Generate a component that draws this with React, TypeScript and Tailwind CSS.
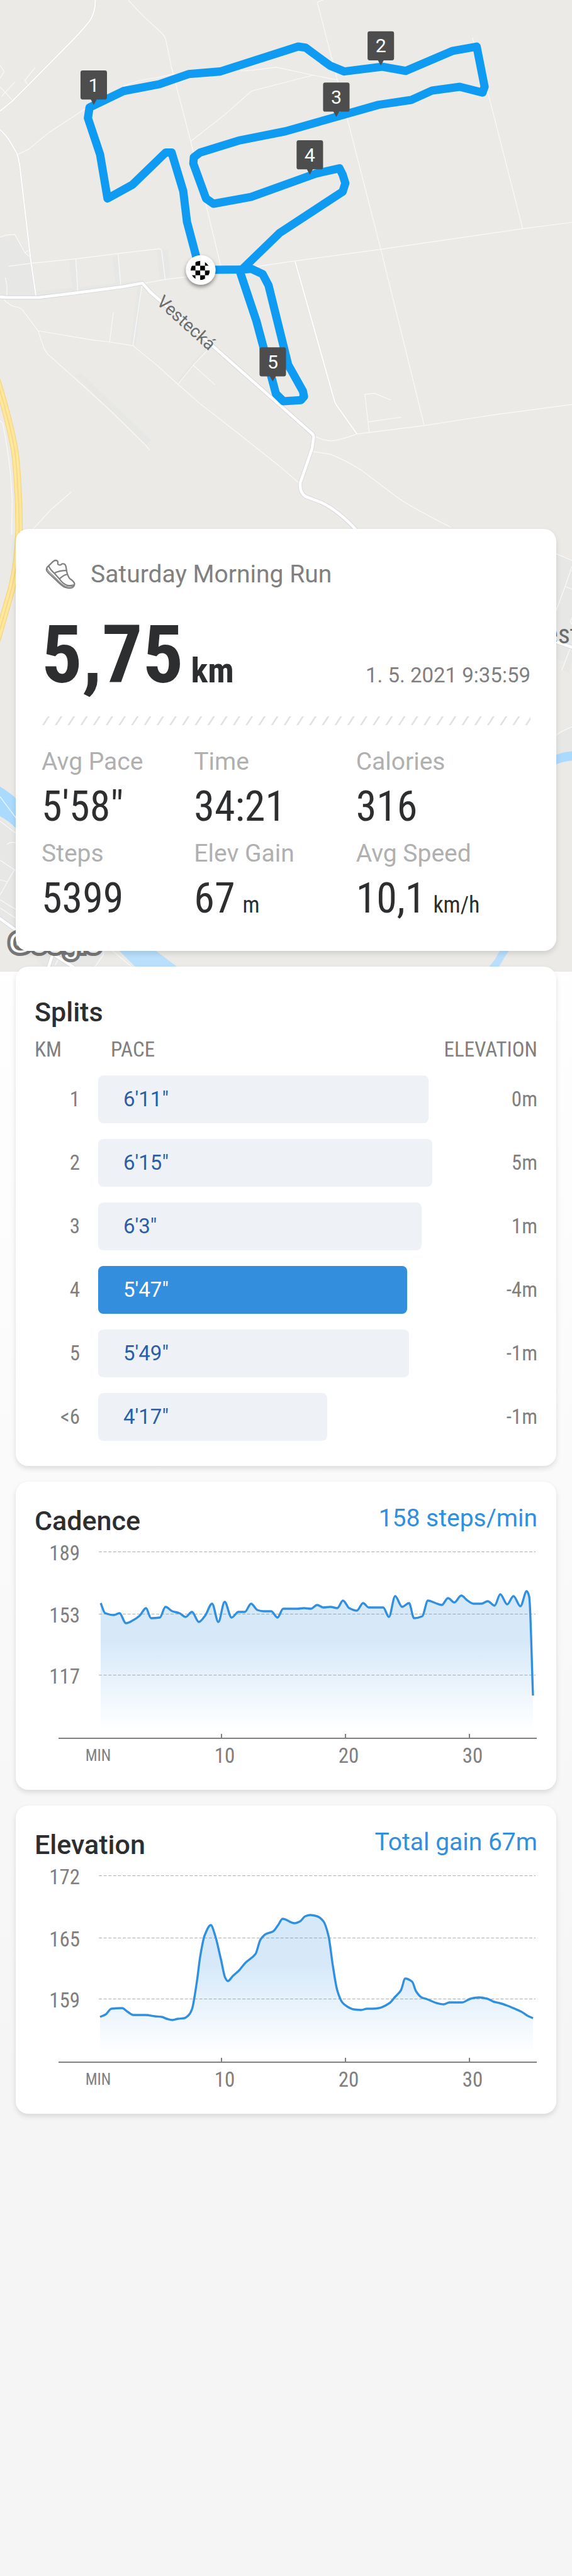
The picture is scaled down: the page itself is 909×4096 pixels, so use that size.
import React from 'react';

type Point = [number, number];

interface Split {
  km: string;
  pace: string;
  seconds: number;
  elevation: string;
}

const stats = [
  { label: 'Avg Pace', value: '5\'58"', unit: '' },
  { label: 'Time', value: '34:21', unit: '' },
  { label: 'Calories', value: '316', unit: '' },
  { label: 'Steps', value: '5399', unit: '' },
  { label: 'Elev Gain', value: '67', unit: 'm' },
  { label: 'Avg Speed', value: '10,1', unit: 'km/h' },
];

const splits: Split[] = [
  { km: '1', pace: '6\'11"', seconds: 371, elevation: '0m' },
  { km: '2', pace: '6\'15"', seconds: 375, elevation: '5m' },
  { km: '3', pace: '6\'3"', seconds: 363, elevation: '1m' },
  { km: '4', pace: '5\'47"', seconds: 347, elevation: '-4m' },
  { km: '5', pace: '5\'49"', seconds: 349, elevation: '-1m' },
  { km: '<6', pace: '4\'17"', seconds: 257, elevation: '-1m' },
];

const FULL_BAR_SECONDS = 380;
const FASTEST_KM = '4';

const cadence: Point[] = [
  [105, 107], [112, 123], [126, 126], [135, 123], [145, 139], [157, 134], [167, 127], [177, 115],
  [185, 131], [199, 130], [208, 113], [219, 120], [230, 123], [240, 129], [250, 121], [261, 137],
  [271, 127], [282, 108], [292, 137], [302, 105], [313, 130], [324, 121], [334, 121], [344, 108],
  [354, 118], [364, 120], [376, 120], [386, 130], [395, 116], [407, 116], [418, 116], [428, 115],
  [439, 116], [449, 110], [459, 114], [470, 113], [481, 115], [490, 103], [500, 115], [512, 119],
  [522, 107], [531, 114], [543, 114], [554, 114], [563, 129], [573, 96], [584, 113], [595, 107],
  [603, 131], [616, 128], [625, 103], [637, 107], [647, 110], [657, 99], [667, 106], [678, 95],
  [688, 103], [698, 108], [710, 108], [720, 104], [731, 111], [740, 93], [751, 109], [761, 96],
  [772, 112], [782, 88], [786, 97], [792, 254],
];

const elevation: Point[] = [
  [104, 250], [113, 246], [122, 237], [139, 236], [148, 242], [157, 247], [177, 247], [191, 249],
  [202, 250], [210, 253], [219, 255], [228, 253], [238, 252], [245, 247], [250, 238], [258, 193],
  [263, 155], [270, 121], [280, 104], [287, 121], [296, 158], [303, 188], [307, 193], [315, 185],
  [325, 176], [335, 164], [351, 150], [359, 127], [368, 118], [379, 114], [387, 104], [394, 94],
  [413, 101], [422, 98], [430, 90], [438, 88], [449, 90], [459, 98], [467, 121], [474, 169],
  [481, 208], [489, 227], [496, 233], [507, 238], [519, 239], [528, 237], [537, 237], [547, 236],
  [564, 228], [573, 218], [582, 208], [589, 189], [600, 194], [606, 209], [615, 219], [624, 222],
  [639, 228], [650, 230], [659, 227], [679, 227], [693, 221], [706, 219], [719, 221], [730, 226],
  [739, 228], [751, 232], [763, 237], [774, 242], [783, 248], [792, 252],
];

// Monotone cubic through all points, so peaks are never overshot
const smoothPath = (points: Point[]) => {
  const slope = (i: number) =>
    (points[i + 1][1] - points[i][1]) / (points[i + 1][0] - points[i][0]);
  const tangents = points.map((_, i) => {
    if (i === 0) return slope(0);
    if (i === points.length - 1) return slope(i - 1);
    const before = slope(i - 1);
    const after = slope(i);
    return before * after <= 0 ? 0 : (2 * before * after) / (before + after);
  });

  return points.slice(1).reduce((path, [x, y], i) => {
    const [px, py] = points[i];
    const third = (x - px) / 3;
    return `${path} C${px + third} ${py + tangents[i] * third} ${x - third} ${y - tangents[i + 1] * third} ${x} ${y}`;
  }, `M${points[0][0]} ${points[0][1]}`);
};

const markers = [
  { label: '1', x: 177, y: 198 },
  { label: '2', x: 719, y: 124 },
  { label: '3', x: 635, y: 221 },
  { label: '4', x: 585, y: 330 },
  { label: '5', x: 515, y: 721 },
];

const minorRoads = [
  'M242 0L272 32L303 60Q311 68 313 75L324 128L360 267L417 503',
  'M610 0L599 4L630 124L719 471L801 804',
  'M892 71L923 182L987 432',
  'M1080 420L987 432L719 471L557 493L482 504',
  'M592 824Q612 832 625 833Q640 832 674 820L801 804L930 784L1080 764',
  'M697 816L689 745L707 743L738 756',
  'M695 797L758 788',
  'M590 853L623 858Q650 868 682 888L752 941Q780 960 851 996',
  'M33 292L54 282L93 250L165 203',
  'M233 163Q262 150 296 147L330 139',
  'M455 134L475 133L521 127L591 142L637 151',
  'M591 142L475 172L424 217L360 267',
  'M8 563L10 569L23 578L36 581L42 585L72 625L83 658L90 669L153 725L213 780L275 841L282 850',
  'M72 625L173 642L207 646L251 653L295 689L336 726L377 762L450 819L527 880L565 913',
  'M268 539L251 653',
  'M214 590L207 646',
  'M397 656L365 690L336 726',
  'M365 690L406 727',
  'M16 503L62 497L143 489L223 479L300 470Q304 470 305 473L312 528',
  'M143 489L147 552',
  'M223 479L228 540',
  'M273 535L312 528L353 523',
  'M10 524L13 540L13 560',
  'M0 448L12 444L28 443L47 477L58 487',
  'M47 477L56 472',
  'M66 128L47 152L52 160',
  'M0 164L24 190',
  'M28 155L3 182',
  'M0 123L8 135L0 148',
  'M0 795L5 799Q14 842 20 896L23 944L22 1010',
  'M62 1000L96 963L134 930',
  'M0 1505L30 1545',
  'M0 1551L30 1574',
  'M13 1595Q20 1590 30 1592',
  'M0 1625L30 1645',
  'M27 1643L0 1691',
  'M0 1662L14 1666',
  'M0 1700L30 1718',
  'M0 1715L30 1735',
  'M205 1790L248 1826',
  'M196 1796L195 1804L180 1826',
  'M112 1808L104 1824',
  'M1050 1046L1080 1059',
  'M1080 1070L1067 1108L1050 1154',
  'M1067 1108L1080 1113',
  'M1080 1166L1077 1174L1080 1180',
  'M1076 1226L1061 1266',
  'M1050 1389L1060 1382L1080 1373',
];

const mainRoads = [
  'M0 561Q6 562 14 562L73 562L147 553L230 542L269 535L284 552L400 652L588 818Q593 822 592 828L589 848L567 912Q565 930 577 938L606 949Q640 965 676 1005',
  'M-6 1731L30 1757L140 1828',
  'M99 1804L90 1832',
  'M1046 1211L1086 1225',
];

const secondaryRoads = [
  'M180 0Q180 24 169 40Q160 52 140 73L52 162L24 190L0 210',
  'M0 245Q14 258 21 271L31 288Q35 296 38 319L58 491L68 560',
  'M557 493L632 759Q634 764 640 772L674 820',
];

const RunMap: React.FC = () => (
  <svg viewBox="0 0 1080 1836" className="block w-full" role="img" aria-label="Route map">
    <defs>
      <clipPath id="flag">
        <circle cx="378" cy="511" r="18" />
      </clipPath>
      <filter id="pinShadow" x="-30%" y="-30%" width="160%" height="170%">
        <feDropShadow dx="0" dy="4" stdDeviation="4" floodColor="#000" floodOpacity="0.45" />
      </filter>
    </defs>
    <rect width="1080" height="1836" fill="#ebeae6" />

    {/* Built-up areas */}
    <g fill="#e7e7e6">
      <path d="M0 450L27 444L60 490L68 560L0 560Z" />
      <path d="M130 490L143 489L147 550L138 552Z" />
      <path d="M212 487L223 483L229 540L219 542Z" />
      <path d="M296 472L317 471L322 519L312 528L301 527Z" />
      <path d="M68 550L147 543L269 529L269 536L147 553L68 562Z" />
      <path d="M260 543L268 539L257 652L246 652Z" />
      <path d="M143 710L153 705L285 831L277 841Z" />
      <path d="M388 656L397 656L337 726L336 718Z" />
      <path d="M0 1546L30 1570L30 1756L0 1735Z" />
      <path d="M50 1790L200 1790L170 1836L90 1836Z" />
      <path d="M1050 1046L1080 1059L1080 1222L1065 1249L1050 1246Z" />
      <path d="M1062 1266L1076 1228L1080 1230L1080 1248L1074 1272Z" />
      <path d="M1050 1389L1080 1373L1080 1419L1050 1426Z" />
    </g>

    {/* Water */}
    <g fill="#abdaff">
      <path d="M0 1486Q14 1494 30 1508L40 1520L40 1574L30 1565Q18 1552 0 1542Z" />
      <path d="M1040 1429L1050 1426Q1064 1421 1080 1419L1080 1437Q1064 1438 1050 1444L1040 1448Z" />
    </g>
    <g fill="#b9dffc">
      <path d="M216 1787L282 1787L334 1826L350 1836L265 1836Z" />
      <path d="M947 1790L966 1790Q956 1802 950 1813L936 1836L916 1836L935 1812Z" />
    </g>

    <g fill="none" strokeLinejoin="round">
      {minorRoads.map((d) => (
        <path key={d} d={d} stroke="#f9fafb" strokeWidth="1.4" />
      ))}
      {secondaryRoads.map((d) => (
        <g key={d}>
          <path d={d} stroke="#dfdfe3" strokeWidth="3.4" />
          <path d={d} stroke="#ffffff" strokeWidth="2.4" />
        </g>
      ))}
      {mainRoads.map((d) => (
        <g key={d}>
          <path d={d} stroke="#d5d6dc" strokeWidth="7.6" />
          <path d={d} stroke="#ffffff" strokeWidth="5.6" />
        </g>
      ))}
      <path d="M-10 706Q20 800 29 860Q36 930 36 1000Q35 1060 22 1112L-6 1210" stroke="#f8d47e" strokeWidth="14" />
      <path d="M-10 706Q20 800 29 860Q36 930 36 1000Q35 1060 22 1112L-6 1210" stroke="#ffe79e" strokeWidth="11" />
      <path d="M-10 706Q20 800 29 860Q36 930 36 1000Q35 1060 22 1112L-6 1210" stroke="#f8d47e" strokeWidth="1.6" />
    </g>

    <text
      transform="translate(294 573) rotate(42)"
      className="font-['Roboto',sans-serif] text-[33px]"
      fill="#6b6d6c"
    >
      Vestecká
    </text>
    <text x="1030" y="1216" className="font-['Roboto_Condensed',sans-serif] text-[50px]" fill="#6b6d6c">
      est
    </text>
    <text
      x="17"
      y="1800"
      className="font-['Liberation_Sans',sans-serif] text-[54px]"
      fill="#ffffff"
      stroke="#777777"
      strokeWidth="12"
      paintOrder="stroke"
    >
      Google
    </text>

    {/* Recorded route */}
    <g fill="none" stroke="#0f9bf2" strokeWidth="15.5" strokeLinejoin="round" strokeLinecap="round">
      <path d="M377 510L370 483L353 419L346 361L324 288L313 288L250 349L203 375L189 292L166 223L169 203L233 172L301 159L356 140L416 135L563 88L577 90L623 124L650 135L722 126L766 134L855 96L900 88L915 164L911 175L868 164L816 171L776 189L715 198L634 221L539 248L453 265L378 288L366 297L365 309L389 375L403 385L474 372L596 328L641 318L647 330L652 346L647 362L528 440L457 509L377 510" />
      <path d="M449 510L475 508L496 518L507 539L544 689L572 739L574 749L568 756L535 758L521 744L513 714L484 606L452 510" />
    </g>

    <circle cx="379" cy="510" r="28" fill="#ffffff" filter="url(#pinShadow)" />
    <g clipPath="url(#flag)">
      {[0, 1, 2, 3].map((row) =>
        [0, 1, 2, 3]
          .filter((col) => (row + col) % 2 === 1)
          .map((col) => (
            <rect key={`${row}${col}`} x={360 + col * 9} y={493 + row * 9} width="9" height="9" />
          ))
      )}
    </g>

    {markers.map((marker) => (
      <g key={marker.label} transform={`translate(${marker.x} ${marker.y})`}>
        <rect x="-25" y="-65" width="50" height="55" rx="4" fill="#4d4d4d" />
        <path d="M-6 -11L6 -11L0 0Z" fill="#4d4d4d" />
        <text y="-25" textAnchor="middle" fill="#ffffff" className="font-['Roboto',sans-serif] text-[36px]">
          {marker.label}
        </text>
      </g>
    ))}
  </svg>
);

const ShoeIcon: React.FC = () => (
  <svg viewBox="46 30 172 172" className="size-12" fill="none" stroke="#808080" strokeWidth="8" strokeLinecap="round" strokeLinejoin="round">
    <path d="M57 76L90 44Q104 32 115 41Q119 46 117 58Q123 66 134 63Q142 54 154 58Q162 62 164 76L168 100Q173 126 185 141Q206 154 212 168Q214 182 201 192Q180 199 158 190Q142 184 112 154L62 107Q46 92 57 76Z" />
    <path d="M66 70Q72 88 96 109L127 144Q148 172 170 179Q190 184 205 178" />
    <path d="M58 86Q60 96 72 106L118 151Q140 174 160 184Q182 191 206 184" strokeWidth="4" />
    <path d="M98 110Q125 95 166 95" />
    <path d="M127 143Q146 122 170 117" />
  </svg>
);

const Card: React.FC<{ className: string; children: React.ReactNode }> = ({ className, children }) => (
  <section className={`bg-white rounded-[20px] shadow-[0_4px_8px_rgba(0,0,0,0.12)] ${className}`}>
    {children}
  </section>
);

interface ChartCardProps {
  id: string;
  title: string;
  summary: string;
  levels: string[];
  points: Point[];
}

const ChartCard: React.FC<ChartCardProps> = ({ id, title, summary, levels, points }) => {
  const line = smoothPath(points);
  const levelY = [26, 125, 222];
  const ticks = [
    { label: '10', x: 297 },
    { label: '20', x: 494 },
    { label: '30', x: 691 },
  ];

  return (
    <Card className="px-[30px] pt-[38px] pb-7">
      <div className="flex items-start justify-between">
        <h2 className="text-[43px] leading-12 font-medium text-[#2d2e30]">{title}</h2>
        <span className="text-[39px] leading-10 text-[#318fe0]">{summary}</span>
      </div>
      <svg viewBox="0 0 799 376" className="block w-full" role="img" aria-label={`${title} chart`}>
        <defs>
          <linearGradient id={id} gradientUnits="userSpaceOnUse" x1="0" y1="165" x2="0" y2="310">
            <stop offset="0" stopColor="#318fe0" stopOpacity="0.2" />
            <stop offset="1" stopColor="#318fe0" stopOpacity="0" />
          </linearGradient>
        </defs>
        {levels.map((level, i) => (
          <g key={level}>
            <path d={`M102 ${levelY[i] - 0.5}H796`} stroke="#b0b0b0" strokeDasharray="5 2.6" />
            <text
              x="72"
              y={levelY[i] + 13}
              textAnchor="end"
              fill="#808080"
              className="font-['Roboto_Condensed',sans-serif] text-[33px]"
            >
              {level}
            </text>
          </g>
        ))}
        <path d={`${line} V312 H${points[0][0]} Z`} fill={`url(#${id})`} />
        <path d={line} fill="none" stroke="#318fe0" strokeWidth="3.4" strokeLinejoin="round" />
        <path d="M38 322H798M297 322V315M494 322V315M691 322V315" fill="none" stroke="#808080" strokeWidth="2" />
        <g fill="#808080" textAnchor="middle" className="font-['Roboto_Condensed',sans-serif]">
          <text x="101" y="358" className="text-[25px]">MIN</text>
          {ticks.map((tick) => (
            <text key={tick.label} x={tick.x + 5} y="361" className="text-[33px]">
              {tick.label}
            </text>
          ))}
        </g>
      </svg>
    </Card>
  );
};

const App: React.FC = () => {
  return (
    <div className="min-h-screen bg-linear-to-b from-white from-35% to-[#f5f5f5] to-80% font-['Roboto',sans-serif]">
      <RunMap />

      <main className="relative -mt-[704px] flex flex-col gap-[25px] px-[25px] pb-10">
        <Card className="px-[41px] pt-12 pb-[47px]">
          <div className="flex items-center gap-6 pl-1.5">
            <ShoeIcon />
            <h1 className="text-[39px] leading-12 text-[#808080]">Saturday Morning Run</h1>
          </div>

          <div className="mt-10 flex items-baseline justify-between">
            <p className="font-['Roboto_Condensed',sans-serif] font-bold text-[#2d2e30]">
              <span className="text-[128px] leading-32">5,75</span>
              <span className="ml-3 text-[56px] leading-none">km</span>
            </p>
            <time className="text-[33px] leading-10 text-[#808080]">1. 5. 2021 9:35:59</time>
          </div>

          <svg className="mt-[34px] block h-3.5 w-full" aria-hidden="true">
            <defs>
              <pattern id="slashes" width="20.2" height="14" patternUnits="userSpaceOnUse">
                <path d="M1 14L4 14L13 0L10 0Z" fill="#e0e0e0" />
              </pattern>
            </defs>
            <rect width="100%" height="14" fill="url(#slashes)" />
          </svg>

          <dl className="mt-[34px] grid grid-cols-[242fr_257fr_277fr] gap-y-3.5">
            {stats.map((stat) => (
              <div key={stat.label}>
                <dt className="text-[39px] leading-12 text-[#b0b0b0]">{stat.label}</dt>
                <dd className="mt-3 font-['Roboto_Condensed',sans-serif] text-[66px] leading-[72px] text-[#2d2e30]">
                  {stat.value}
                  {stat.unit && <span className="ml-3 text-[36px] leading-none">{stat.unit}</span>}
                </dd>
              </div>
            ))}
          </dl>
        </Card>

        <Card className="px-[30px] pt-12 pb-7">
          <h2 className="text-[43px] leading-12 font-medium text-[#2d2e30]">Splits</h2>
          <table className="mt-4 w-full table-fixed font-['Roboto_Condensed',sans-serif] text-[33px] leading-10 text-[#808080]">
            <colgroup>
              <col className="w-[101px]" />
              <col />
              <col className="w-40" />
            </colgroup>
            <thead>
              <tr className="h-12 align-top">
                <th className="text-left font-normal">KM</th>
                <th className="pl-5 text-left font-normal">PACE</th>
                <th className="text-right font-normal">ELEVATION</th>
              </tr>
            </thead>
            <tbody>
              {splits.map((split) => (
                <tr key={split.km} className="h-[101px]">
                  <td className="pr-[29px] text-right">{split.km}</td>
                  <td>
                    <div
                      className={`flex h-[76px] items-center rounded-lg pl-10 font-['Roboto',sans-serif] ${
                        split.km === FASTEST_KM ? 'bg-[#338fde] text-white' : 'bg-[#eef2f7] text-[#2c5ea8]'
                      }`}
                      style={{ width: `${(split.seconds / FULL_BAR_SECONDS) * 100}%` }}
                    >
                      {split.pace}
                    </div>
                  </td>
                  <td className="text-right">{split.elevation}</td>
                </tr>
              ))}
            </tbody>
          </table>
        </Card>

        <ChartCard
          id="cadenceFill"
          title="Cadence"
          summary="158 steps/min"
          levels={['189', '153', '117']}
          points={cadence}
        />
        <ChartCard
          id="elevationFill"
          title="Elevation"
          summary="Total gain 67m"
          levels={['172', '165', '159']}
          points={elevation}
        />
      </main>
    </div>
  );
};

export default App;
